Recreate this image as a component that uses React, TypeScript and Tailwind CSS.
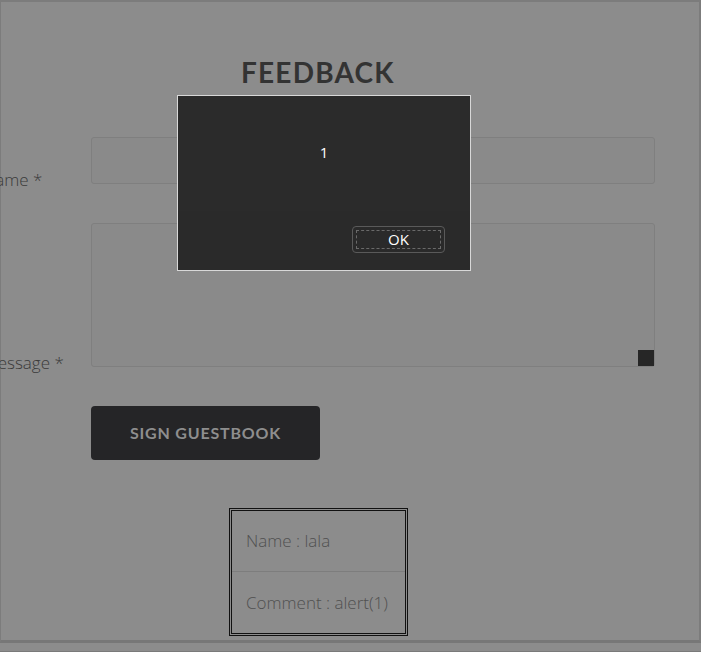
export default function App() {
  return (
    <div className="relative w-[701px] h-[652px] overflow-hidden bg-[#8c8c8c] font-['Open_Sans',sans-serif]">
      <div className="flex flex-col h-[643px] border-t-2 border-l border-r-2 border-[#7c7c7c] border-b-[3px] border-b-[#777]">
        <h1 className="mt-[53px] ml-[240px] text-[28px] leading-[34px] font-bold text-[#333] tracking-[1.2px] font-['Lato',sans-serif]">
          FEEDBACK
        </h1>

        <form className="mt-[48px] flex flex-col">
          <div className="flex items-end">
            <label className="w-[108px] -ml-[18px] text-[17px] leading-[20px] font-light text-[#3a3a3a] translate-y-[6px]">
              Name *
            </label>
            <div className="w-[564px] h-[47px] rounded-[3px] border border-[#7f7f7f] bg-[#8a8a8a]" />
          </div>

          <div className="flex items-end mt-[39px]">
            <label className="w-[108px] -ml-[18px] text-[17px] leading-[20px] font-light text-[#3a3a3a] translate-y-[6px]">
              Message *
            </label>
            <div className="relative w-[564px] h-[144px] rounded-[3px] border border-[#7f7f7f] bg-[#8a8a8a]">
              <div className="absolute right-0 bottom-0 w-[16px] h-[16px] bg-[#262626]" />
            </div>
          </div>

          <div className="ml-[90px] mt-[39px]">
            <button
              type="button"
              className="w-[229px] h-[54px] rounded-[4px] bg-[#252527] text-[16px] font-bold text-[#8e8e8e] tracking-[0.8px] font-['Lato',sans-serif]"
            >
              SIGN GUESTBOOK
            </button>
          </div>
        </form>

        <div className="mt-[48px] ml-[228px] w-[179px] border-[3px] border-double border-[#111]">
          <div className="h-[61px] flex items-center px-[14px] border-b border-[#7d7d7d] text-[17px] font-light text-[#505050]">
            Name : lala
          </div>
          <div className="h-[61px] flex items-center px-[14px] text-[17px] font-light text-[#505050]">
            Comment : alert(1)
          </div>
        </div>
      </div>
      <div className="h-[9px] border-b border-[#7a7a7a]" />

      <div className="absolute left-[177px] top-[95px] w-[294px] h-[176px] bg-[#2b2b2b] border border-[#d8d8d8] flex flex-col">
        <div className="h-[115px] flex justify-center pt-[47px] text-[15px] leading-[18px] text-white">1</div>
        <div className="flex-1 flex justify-end items-start pr-[25px] pt-[15px] bg-[#2a2a2a]">
          <button
            type="button"
            className="w-[93px] h-[27px] rounded-[4px] border border-[#5a5a5a] p-[3px]"
          >
            <span className="flex items-center justify-center w-full h-full border border-dashed border-[#6a6a6a] text-[15px] text-white">
              OK
            </span>
          </button>
        </div>
      </div>
    </div>
  );
}
